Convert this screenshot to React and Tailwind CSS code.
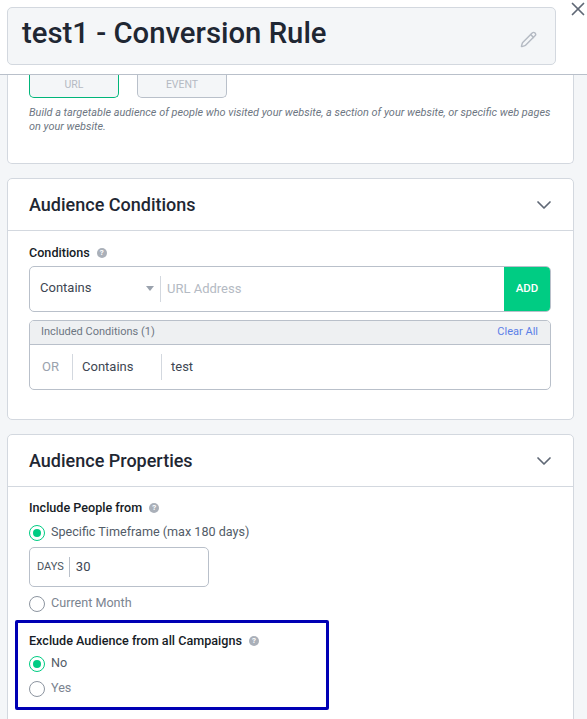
import { ChevronDown, Pencil, X } from "lucide-react";

function Help() {
  return (
    <span className="ml-[7px] inline-flex h-[10px] w-[10px] items-center justify-center rounded-full bg-[#aab0b9] text-[8px] font-bold leading-none text-white">
      ?
    </span>
  );
}

function Radio({ checked, label }) {
  return (
    <div className="flex h-[17px] items-center gap-[6px]">
      <span
        className={
          "flex h-4 w-4 items-center justify-center rounded-full border bg-white " +
          (checked ? "border-[#00cc83]" : "border-[#8d95a0]")
        }
      >
        {checked && <span className="h-2 w-2 rounded-full bg-[#00cc83]" />}
      </span>
      <span className={"text-[12.6px] " + (checked ? "text-[#525c68]" : "text-[#7b8490]")}>{label}</span>
    </div>
  );
}

function CardHead({ title }) {
  return (
    <div className="flex h-[52px] items-center justify-between border-b border-[#d3d8df] pl-[21px] pr-[17px]">
      <h2 className="pb-[1px] text-[18px] font-medium text-[#1f2733]">{title}</h2>
      <ChevronDown className="h-6 w-6 text-[#5f6875]" strokeWidth={1.7} />
    </div>
  );
}

export default function App() {
  return (
    <div className="relative flex h-[719px] w-[587px] flex-col overflow-hidden bg-[#f4f6f8] font-['Roboto',sans-serif]">
      <header className="flex h-[75px] shrink-0 items-start border-b border-[#b9c0ca] bg-white pl-[7px] pt-[7px]">
        <div className="flex h-[58px] w-[549px] shrink-0 items-center justify-between rounded-[5px] border border-[#d3d8df] bg-[#f4f6f8] pl-[14px] pr-[18px]">
          <h1 className="pb-[4px] text-[29.3px] font-medium text-[#1f2733]">test1 - Conversion Rule</h1>
          <Pencil className="mt-[6px] h-[17px] w-[17px] text-[#b4bac3]" strokeWidth={2} />
        </div>
        <X className="-mt-[9px] ml-[11px] h-[22px] w-[22px] shrink-0 text-[#5f6875]" strokeWidth={1.9} />
      </header>

      <main className="flex flex-col gap-[14px] pl-[7px] pr-[13px]">
        <section className="h-[89px] rounded-b-[5px] border border-t-0 border-[#d3d8df] bg-white px-[21px]">
          <div className="flex gap-[18px]">
            <div className="flex h-[23px] w-[90px] items-center justify-center rounded-b-[5px] border border-t-0 border-[#00b57a] bg-[#f4f6f8] pb-[2px] text-[10.5px] text-[#b4bac3]">
              URL
            </div>
            <div className="flex h-[23px] w-[90px] items-center justify-center rounded-b-[5px] border border-t-0 border-[#b9c0ca] bg-[#f4f6f8] pb-[2px] text-[10.5px] text-[#b4bac3]">
              EVENT
            </div>
          </div>
          <p className="mt-[8px] text-[10.9px] italic leading-[14px] text-[#6d7682]">
            Build a targetable audience of people who visited your website, a section of your website, or specific web pages on your website.
          </p>
        </section>

        <section className="h-[242px] rounded-[5px] border border-[#d3d8df] bg-white">
          <CardHead title="Audience Conditions" />
          <div className="pl-[21px] pr-[22px] pt-[14px]">
            <div className="flex h-[16px] items-center text-[12.6px] font-medium text-[#161c26]">
              Conditions
              <Help />
            </div>
            <div className="mt-[5px] flex h-[46px] items-center overflow-hidden rounded-[5px] border border-[#b9c0ca]">
              <div className="flex h-[26px] w-[131px] items-center justify-between border-r border-[#d3d8df] pl-[10px] pr-[6px] pb-[2px] text-[13px] text-[#3d4652]">
                Contains
                <span className="h-0 w-0 border-x-4 border-t-[5px] border-x-transparent border-t-[#9aa2ad]" />
              </div>
              <div className="flex-1 pl-[6px] text-[13px] text-[#b4bac3]">URL Address</div>
              <div className="flex h-full w-[46px] items-center justify-center bg-[#00cc83] text-[11.5px] font-medium text-white">
                ADD
              </div>
            </div>
            <div className="mt-[8px] overflow-hidden rounded-[5px] border border-[#b9c0ca]">
              <div className="flex h-[24px] items-center justify-between border-b border-[#b9c0ca] bg-[#eef0f2] pl-[11px] pr-[12px] text-[11px]">
                <span className="text-[#6d7682]">Included Conditions (1)</span>
                <span className="text-[#5b7fe8]">Clear All</span>
              </div>
              <div className="flex h-[44px] items-center text-[13px] text-[#3d4652]">
                <span className="flex h-[26px] w-[43px] items-center border-r border-[#d3d8df] pl-[12px] text-[#9aa2ad]">OR</span>
                <span className="flex h-[26px] w-[89px] items-center border-r border-[#d3d8df] pl-[9px]">Contains</span>
                <span className="pl-[9px]">test</span>
              </div>
            </div>
          </div>
        </section>

        <section className="h-[300px] rounded-t-[5px] border border-[#d3d8df] bg-white">
          <CardHead title="Audience Properties" />
          <div className="px-[21px] pt-[13px]">
            <div className="flex h-[16px] items-center text-[12.6px] font-medium text-[#161c26]">
              Include People from
              <Help />
            </div>
            <div className="mt-[8px]">
              <Radio checked label="Specific Timeframe (max 180 days)" />
            </div>
            <div className="mt-[6px] flex h-[40px] w-[180px] items-center rounded-[5px] border border-[#b9c0ca] pl-[7px]">
              <span className="flex h-[20px] items-center border-r border-[#b9c0ca] pr-[5px] text-[11px] text-[#4a5460]">DAYS</span>
              <span className="pl-[6px] text-[13px] text-[#3d4652]">30</span>
            </div>
            <div className="mt-[8px]">
              <Radio label="Current Month" />
            </div>
            <div className="mt-[21px] flex h-[16px] items-center text-[12.6px] font-medium text-[#161c26]">
              Exclude Audience from all Campaigns
              <Help />
            </div>
            <div className="mt-[6px] flex flex-col gap-[8px]">
              <Radio checked label="No" />
              <Radio label="Yes" />
            </div>
          </div>
        </section>
      </main>

      <div className="absolute left-[15px] top-[620px] h-[90px] w-[314px] rounded-[2px] border-[3px] border-[#0000b4]" />
    </div>
  );
}
